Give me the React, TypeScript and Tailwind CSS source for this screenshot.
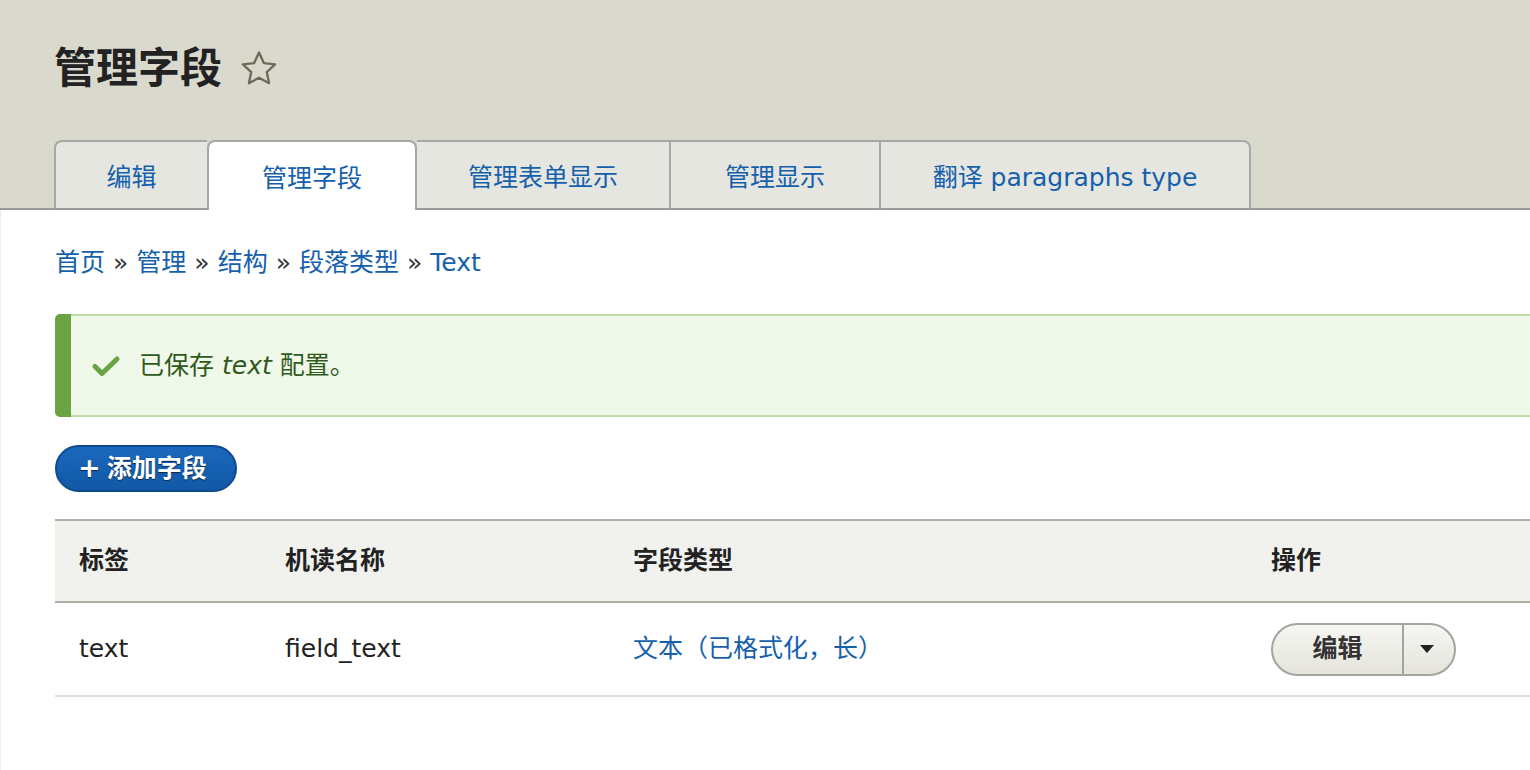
import React from 'react';

const tabs = [
  { label: '编辑', w: 'w-[153px]', cls: 'rounded-tl-[8px] border-l-2' },
  { label: '管理字段', w: 'w-[210px]', cls: 'rounded-t-[8px] border-x-2 bg-white relative z-10', active: true },
  { label: '管理表单显示', w: 'w-[254px]', cls: 'border-r-2' },
  { label: '管理显示', w: 'w-[210px]', cls: 'border-r-2' },
  { label: '翻译 paragraphs type', w: 'w-[370px]', cls: 'rounded-tr-[8px] border-r-2' },
];

const crumbs = ['首页', '管理', '结构', '段落类型', 'Text'];

const StarIcon = () => (
  <svg width="42" height="42" viewBox="0 0 24 24" fill="none" stroke="#6f6b57" strokeWidth="1.35" strokeLinejoin="round">
    <path d="M12 2.6l2.8 6 6.4.75-4.75 4.4 1.3 6.35L12 17 6.25 20.1l1.3-6.35-4.75-4.4 6.4-.75z" />
  </svg>
);

const CheckIcon = () => (
  <svg width="30" height="24" viewBox="0 0 30 24" fill="none" stroke="#69a443" strokeWidth="5" strokeLinecap="round" strokeLinejoin="round">
    <path d="M4 12.5l7 7L26 5" />
  </svg>
);

export default function App() {
  return (
    <div className="w-[1530px] h-[770px] overflow-hidden bg-white text-[#222] font-['DejaVu_Sans','Noto_Sans_CJK_SC',sans-serif]">
      {/* Header */}
      <header className="bg-[#dad9cd] border-b-2 border-[#9a9a9a] pl-[54px]">
        <div className="h-[140px] flex items-center gap-[16px] pb-[2px]">
          <h1 className="text-[42px] leading-none font-semibold text-[#222]">管理字段</h1>
          <StarIcon />
        </div>
        <nav className="flex -mb-[2px]">
          {tabs.map(t => (
            <div
              key={t.label}
              className={`${t.w} ${t.cls} h-[70px] border-t-2 border-[#a7a7a5] flex items-center justify-center pt-[6px] text-[25px] text-[#1560ad] ${t.active ? '' : 'bg-[#e6e6e0] border-b-2 border-b-[#9a9a9a]'}`}
            >
              {t.label}
            </div>
          ))}
        </nav>
      </header>

      <main className="pl-[54px] w-[1600px] h-[560px] border-l border-[#eeeeee] pt-[37px]">
        {/* Breadcrumb */}
        <div className="text-[25px] leading-[32px] flex gap-[8px]">
          {crumbs.map((c, i) => (
            <React.Fragment key={c}>
              {i > 0 && <span className="text-[#333]">»</span>}
              <span className="text-[#1560ad]">{c}</span>
            </React.Fragment>
          ))}
        </div>

        {/* Status message */}
        <div className="mt-[35px] h-[103px] flex rounded-l-[5px] overflow-hidden">
          <div className="w-[16px] bg-[#6aa342]" />
          <div className="flex-1 flex items-center bg-[#f0f8e9] border-y-2 border-r-2 border-[#c2dcab] pl-[20px] gap-[18px]">
            <CheckIcon />
            <p className="text-[25px] text-[#2f5a1c]">
              已保存 <em className="font-medium">text</em> 配置。
            </p>
          </div>
        </div>

        {/* Add field */}
        <button className="mt-[28px] h-[47px] w-[182px] rounded-full bg-gradient-to-b from-[#1a68bd] to-[#1258a6] border-2 border-[#0f4a8c] text-white text-[25px] font-bold flex items-center pl-[21px] gap-[6px] [text-shadow:0_1px_1px_rgba(0,0,0,0.6)]">
          <span className="text-[27px] leading-none -mt-[3px]">+</span>
          <span>添加字段</span>
        </button>

        {/* Table */}
        <table className="mt-[27px] w-full border-collapse text-[25px]">
          <thead>
            <tr className="bg-[#f1f1ed] border-y-2 border-[#b0afa8] h-[82px] text-left">
              <th className="w-[206px] pl-[24px] font-bold">标签</th>
              <th className="w-[348px] pl-[24px] font-bold">机读名称</th>
              <th className="w-[638px] pl-[24px] font-bold">字段类型</th>
              <th className="pl-[24px] font-bold">操作</th>
            </tr>
          </thead>
          <tbody>
            <tr className="border-b-2 border-[#e0ddd7] h-[94px]">
              <td className="pl-[24px]">text</td>
              <td className="pl-[24px]">field_text</td>
              <td className="pl-[24px] text-[#1560ad]">文本（已格式化，长）</td>
              <td className="pl-[24px]">
                <div className="inline-flex h-[53px] rounded-full border-2 border-[#a3a3a0] bg-gradient-to-b from-[#f6f6f2] to-[#e5e5dd] overflow-hidden">
                  <span className="w-[131px] flex items-center justify-center font-semibold text-[#333] border-r-2 border-[#a3a3a0]">编辑</span>
                  <span className="w-[50px] flex items-center justify-center pr-[4px]">
                    <svg width="14" height="8" viewBox="0 0 14 8"><path d="M0 0h14L7 8z" fill="#222" /></svg>
                  </span>
                </div>
              </td>
            </tr>
          </tbody>
        </table>
      </main>
    </div>
  );
}
